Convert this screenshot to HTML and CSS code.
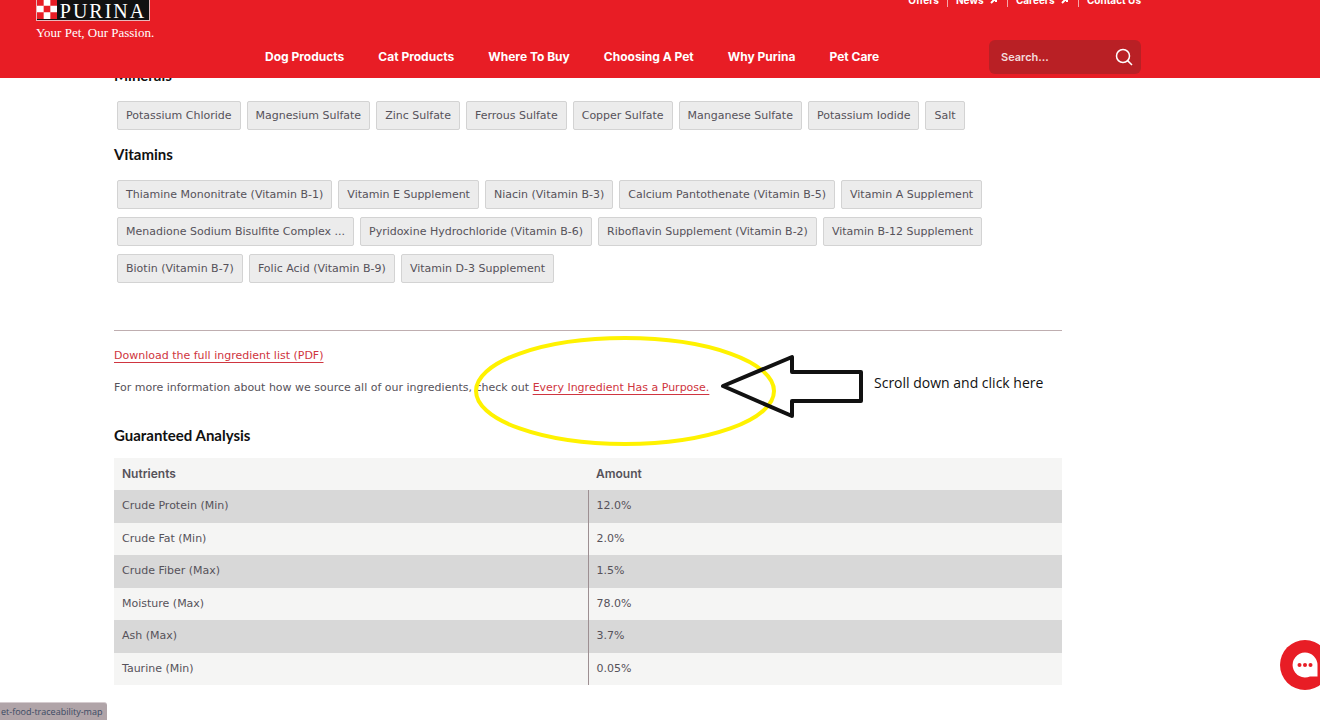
FILE: index.html
```html
<!DOCTYPE html>
<html lang="en">
  <head>
    <meta charset="UTF-8" />
    <meta name="viewport" content="width=device-width, initial-scale=1.0" />
    <title>Purina - Ingredients</title>
    <link rel="stylesheet" href="styles.css">
  </head>
  <body>
    <header class="header">
      <div class="header-inner">
        <a class="brand" href="#">
          <span class="logo">
            <svg class="checker" viewBox="0 0 18 18" aria-hidden="true">
              <rect width="18" height="18" fill="#e81d25" />
              <path fill="#fff" d="M6 0h6v6H6zM0 6h6v6H0zM12 6h6v6h-6zM6 12h6v6H6z" />
            </svg>
            <span class="wordmark">PURINA</span>
          </span>
          <span class="tagline">Your Pet, Our Passion.</span>
        </a>
        <div class="header-right">
          <nav class="top-links">
            <a href="#">Offers</a>
            <a href="#">News
              <svg class="ext" viewBox="0 0 8 8" aria-hidden="true"><path d="M1 7L6 2M2 2h4v4" /></svg>
            </a>
            <a href="#">Careers
              <svg class="ext" viewBox="0 0 8 8" aria-hidden="true"><path d="M1 7L6 2M2 2h4v4" /></svg>
            </a>
            <a href="#">Contact Us</a>
          </nav>
          <div class="nav-row">
            <nav class="main-nav">
              <a href="#">Dog Products</a>
              <a href="#">Cat Products</a>
              <a href="#">Where To Buy</a>
              <a href="#">Choosing A Pet</a>
              <a href="#">Why Purina</a>
              <a href="#">Pet Care</a>
            </nav>
            <form class="search">
              <input type="text" placeholder="Search..." aria-label="Search" />
              <button type="submit" aria-label="Submit search">
                <svg viewBox="0 0 18 18" aria-hidden="true"><circle cx="8" cy="8" r="6.5" /><path d="M12.6 12.6L17 17" /></svg>
              </button>
            </form>
          </div>
        </div>
      </div>
    </header>

    <main class="content">
      <h3>Minerals</h3>
      <div class="chips">
        <button type="button">Potassium Chloride</button>
        <button type="button">Magnesium Sulfate</button>
        <button type="button">Zinc Sulfate</button>
        <button type="button">Ferrous Sulfate</button>
        <button type="button">Copper Sulfate</button>
        <button type="button">Manganese Sulfate</button>
        <button type="button">Potassium Iodide</button>
        <button type="button">Salt</button>
      </div>

      <h3>Vitamins</h3>
      <div class="chips">
        <button type="button">Thiamine Mononitrate (Vitamin B-1)</button>
        <button type="button">Vitamin E Supplement</button>
        <button type="button">Niacin (Vitamin B-3)</button>
        <button type="button">Calcium Pantothenate (Vitamin B-5)</button>
        <button type="button">Vitamin A Supplement</button>
        <button type="button">Menadione Sodium Bisulfite Complex ...</button>
        <button type="button">Pyridoxine Hydrochloride (Vitamin B-6)</button>
        <button type="button">Riboflavin Supplement (Vitamin B-2)</button>
        <button type="button">Vitamin B-12 Supplement</button>
        <button type="button">Biotin (Vitamin B-7)</button>
        <button type="button">Folic Acid (Vitamin B-9)</button>
        <button type="button">Vitamin D-3 Supplement</button>
      </div>

      <section class="sourcing">
        <p><a href="#">Download the full ingredient list (PDF)</a></p>
        <p>For more information about how we source all of our ingredients, check out <a href="#">Every Ingredient Has a Purpose.</a></p>

        <!-- hand-drawn callout over the link -->
        <div class="callout">
          <svg width="390" height="112" viewBox="0 0 390 112" aria-hidden="true">
            <ellipse cx="152" cy="56" rx="149" ry="53" fill="none" stroke="#fff200" stroke-width="4" />
            <path d="M250 51L319 22V37H388V66H319V81Z" fill="none" stroke="#111" stroke-width="4" stroke-linejoin="round" />
          </svg>
          <span>Scroll down and click here</span>
        </div>
      </section>

      <h3>Guaranteed Analysis</h3>
      <table>
        <thead>
          <tr><th>Nutrients</th><th>Amount</th></tr>
        </thead>
        <tbody>
          <tr><td>Crude Protein (Min)</td><td>12.0%</td></tr>
          <tr><td>Crude Fat (Min)</td><td>2.0%</td></tr>
          <tr><td>Crude Fiber (Max)</td><td>1.5%</td></tr>
          <tr><td>Moisture (Max)</td><td>78.0%</td></tr>
          <tr><td>Ash (Max)</td><td>3.7%</td></tr>
          <tr><td>Taurine (Min)</td><td>0.05%</td></tr>
        </tbody>
      </table>
    </main>

    <button class="chat" type="button" aria-label="Open chat">
      <svg viewBox="0 0 50 50" aria-hidden="true">
        <path fill="#fff" d="M25 12.500a12.500 12.500 0 1 0 5 24h7.500V25A12.500 12.500 0 0 0 25 12.500z" />
        <g fill="#e81d25"><circle cx="19.500" cy="25" r="2" /><circle cx="25" cy="25" r="2" /><circle cx="30.500" cy="25" r="2" /></g>
      </svg>
    </button>
    <div class="status">et-food-traceability-map</div>
  </body>
</html>
```

FILE: styles.css
```css
* {
  box-sizing: border-box;
}
body {
  margin: 0;
  background: #fff;
  color: #56525a;
  font-family: "DejaVu Sans", sans-serif;
  font-size: 11px;
  line-height: 16px;
  overflow: hidden;
}
button,
input {
  font: inherit;
}
a {
  text-decoration: none;
}

/* header */
.header {
  position: fixed;
  top: 0;
  left: 0;
  right: 0;
  z-index: 2;
  height: 78px;
  padding: 0 36px;
  display: flex;
  align-items: flex-end;
  overflow: hidden;
  background: #e81d25;
}
.header-inner {
  width: 100%;
  max-width: 1105px;
  display: flex;
  align-items: flex-end;
  padding-bottom: 4px;
}
.header a {
  color: #fff;
  white-space: nowrap;
}
.brand {
  width: 229px;
  padding-bottom: 33px;
}
.logo {
  display: flex;
  width: 114px;
  height: 24px;
  border: 1px solid #e8b9bb;
  background: #111;
}
.checker {
  width: 20px;
  height: 22px;
}
.wordmark {
  flex: 1;
  text-align: center;
  font-family: "Liberation Serif", serif;
  font-size: 20px;
  line-height: 26px;
  letter-spacing: 2px;
}
.tagline {
  display: block;
  margin-top: 4px;
  font-family: "Liberation Serif", serif;
  font-size: 13px;
  line-height: 16px;
}
.header-right {
  flex: 1;
}
.top-links {
  display: flex;
  justify-content: flex-end;
  margin-bottom: 33px;
  font-family: Inter, sans-serif;
  font-size: 10px;
  font-weight: 700;
  line-height: 14px;
}
.top-links a {
  padding-left: 8px;
}
.top-links a + a {
  margin-left: 8px;
  border-left: 1px solid #f7a5a8;
}
.ext {
  width: 8px;
  height: 8px;
  margin: 0 1px 0 4px;
  fill: none;
  stroke: #fff;
  stroke-width: 2;
}
.nav-row {
  display: flex;
  align-items: center;
  justify-content: space-between;
}
.main-nav {
  display: flex;
  gap: 34px;
  font-family: Inter, sans-serif;
  font-size: 12px;
  font-weight: 700;
}
.search {
  display: flex;
  align-items: center;
  width: 152px;
  height: 34px;
  padding: 0 8px 0 12px;
  border-radius: 6px;
  background: #b92025;
}
.search input {
  flex: 1;
  min-width: 0;
  padding: 0;
  border: 0;
  outline: 0;
  background: none;
  color: #fff;
  font-family: Inter, sans-serif;
  font-weight: 600;
}
.search input::placeholder {
  color: #f3dcdc;
}
.search button {
  width: 18px;
  height: 18px;
  padding: 0;
  border: 0;
  background: none;
}
.search svg {
  display: block;
  fill: none;
  stroke: #fff;
  stroke-width: 1.5;
}

/* page */
.content {
  max-width: 1062px;
  padding: 67px 0 0 114px;
}
h3 {
  margin: 0;
  color: #111;
  font-family: Lato, sans-serif;
  font-size: 15px;
  font-weight: 700;
  line-height: 16px;
}
.chips {
  display: flex;
  flex-wrap: wrap;
  gap: 8px 6px;
  margin: 18px 0 16px;
  padding-left: 3px;
}
.chips button {
  height: 29px;
  padding: 0 8px;
  border: 1px solid #d3d3d3;
  border-radius: 2px;
  background: #ececec;
  color: #56525a;
}
.sourcing {
  position: relative;
  margin: 47px 0 31px;
  padding-top: 17px;
  border-top: 1px solid #bfaeb0;
}
.sourcing p {
  margin: 0 0 16px;
}
.sourcing a {
  color: #cf3540;
  text-decoration: underline;
  text-underline-offset: 3px;
}
.callout {
  position: absolute;
  top: 4px;
  left: 359px;
  display: flex;
  align-items: center;
  gap: 11px;
  color: #111;
  font-family: "Open Sans", sans-serif;
  font-size: 14px;
  white-space: nowrap;
}
.callout span {
  padding-bottom: 16px;
}

table {
  width: 100%;
  height: 227px;
  margin-top: 15px;
  border-collapse: collapse;
  table-layout: fixed;
  background: #f5f5f4;
}
th,
td {
  padding: 8px;
  text-align: left;
}
th {
  font-family: Inter, sans-serif;
  font-size: 12px;
  font-weight: 600;
}
tbody tr:nth-child(odd) {
  background: #d8d8d8;
}
td + td {
  border-left: 1px solid #9d8f92;
}

.chat {
  position: fixed;
  right: -10px;
  bottom: 30px;
  width: 50px;
  height: 50px;
  padding: 0;
  border: 0;
  border-radius: 50%;
  background: #e81d25;
}
.chat svg {
  display: block;
}
.status {
  position: fixed;
  left: 0;
  bottom: 0;
  padding: 1px 5px 0 1px;
  border-top: 1px solid #d5cccf;
  border-radius: 0 3px 0 0;
  background: #b0a4a8;
  color: #3b4a63;
  font-family: "Open Sans", sans-serif;
  font-size: 9px;
}
```
